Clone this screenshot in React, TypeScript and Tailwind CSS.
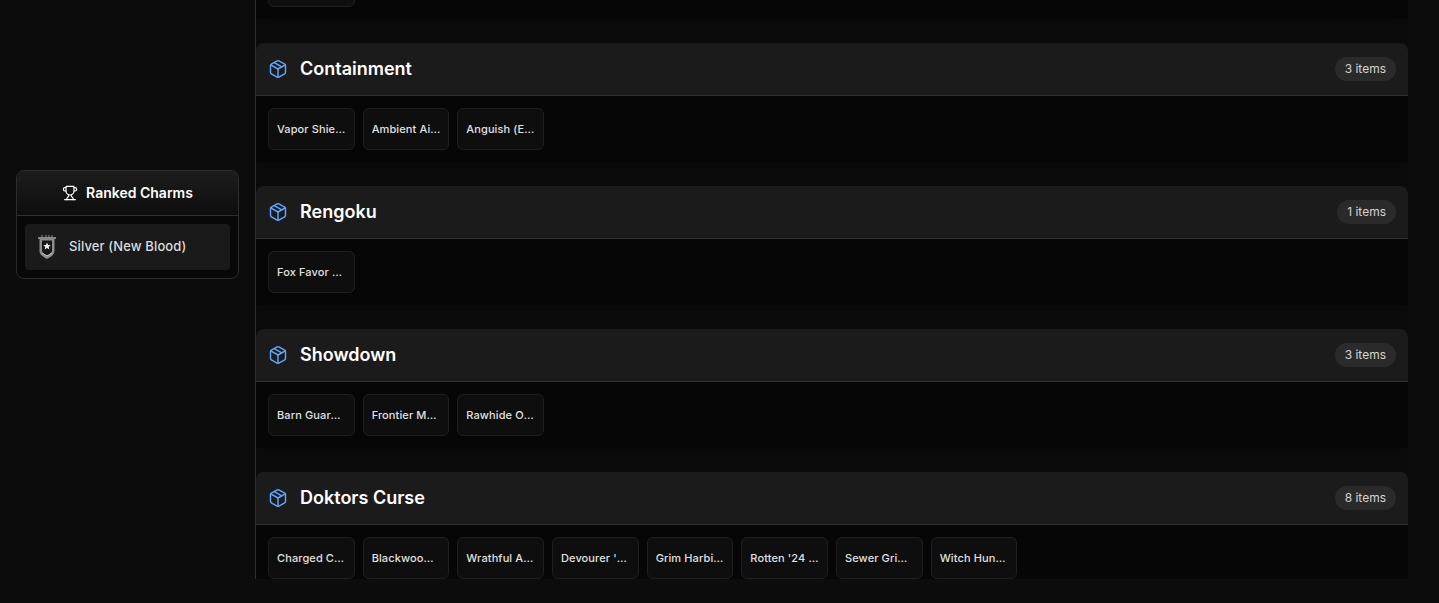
import { Package, Trophy } from "lucide-react";

const sections = [
  { name: "Containment", items: ["Vapor Shield (Epic)", "Ambient Air (Rare)", "Anguish (Epic)"] },
  { name: "Rengoku", items: ["Fox Favor (Rare)"] },
  { name: "Showdown", items: ["Barn Guardian (Rare)", "Frontier Medal (Epic)", "Rawhide Oath (Rare)"] },
  {
    name: "Doktors Curse",
    items: [
      "Charged Coil (Rare)",
      "Blackwood Totem (Rare)",
      "Wrathful Altar (Epic)",
      "Devourer '24 (Epic)",
      "Grim Harbinger (Rare)",
      "Rotten '24 Skull (Epic)",
      "Sewer Grime (Rare)",
      "Witch Hunter (Epic)",
    ],
  },
];

function Chip({ label }: { label: string }) {
  return (
    <div className="h-[42px] min-w-0 rounded-md border border-[#1f1f1f] bg-[#0e0e0e] px-2 flex items-center">
      <span className="truncate text-[11px] font-medium text-[#e0e0e0] tracking-[0.01em]">{label}</span>
    </div>
  );
}

function Badge() {
  return (
    <svg width="20" height="26" viewBox="0 0 20 26" fill="none">
      <path d="M5 1v3M9 1v3M12 1v3M15 1v3" stroke="#8a8a8a" strokeWidth="1" />
      <path d="M1 4h18" stroke="#a8a8a8" strokeWidth="1.4" />
      <path d="M2.5 5h15v12c0 4-4 6-7.500 8C6.500 23 2.500 21 2.500 17z" fill="#8c8c8c" />
      <path d="M5 6.500h10v10c0 2.500-2.500 4-5 5-2.500-1-5-2.500-5-5z" fill="#161616" />
      <path d="M10 8.500l1.100 2.500 2.700.2-2.100 1.700.7 2.600-2.400-1.400-2.400 1.400.7-2.600-2.100-1.700 2.700-.2z" fill="#f0f0f0" />
      <path d="M5 19l5 3 5-3" stroke="#c4c4c4" strokeWidth="1" />
    </svg>
  );
}

export default function App() {
  return (
    <div className="h-[603px] overflow-hidden bg-[#0c0c0d] flex font-['Inter',sans-serif] text-white">
      <aside className="w-[255px] shrink-0 px-4 pt-[170px]">
        <div className="rounded-lg border border-[#2c2c2c] bg-[#080808] overflow-hidden">
          <div className="h-[45px] border-b border-[#303030] bg-gradient-to-b from-[#1d1d1d] to-[#0d0d0d] flex items-center justify-center gap-2">
            <Trophy size={16} strokeWidth={1.75} color="#ffffff" />
            <span className="text-sm font-semibold text-white">Ranked Charms</span>
          </div>
          <div className="p-2">
            <div className="h-[46px] rounded bg-[#1a1a1a] flex items-center gap-3 px-3">
              <Badge />
              <span className="text-[13px] font-medium text-[#dcdcdc] tracking-[0.01em]">Silver (New Blood)</span>
            </div>
          </div>
        </div>
      </aside>
      <main className="h-[579px] overflow-hidden w-[1153px] shrink-0 border-l border-[#2e2e2e]">
        <div className="-mt-[47px] mb-6 p-3 bg-[#060606] shadow-[0_6px_16px_rgba(0,0,0,0.35)]">
          <div className="grid grid-cols-12 gap-2">
            <Chip label="Deadlock" />
          </div>
        </div>
        {sections.map((s) => (
          <section key={s.name} className="mb-6 shadow-[0_6px_16px_rgba(0,0,0,0.35)]">
            <header className="h-[53px] rounded-t-lg bg-[#1b1b1c] border-b border-[#313131] flex items-center justify-between pl-3 pr-3">
              <div className="flex items-center gap-3">
                <Package size={20} strokeWidth={1.75} color="#60a5fa" />
                <h2 className="text-lg font-semibold text-white">{s.name}</h2>
              </div>
              <span className="h-6 rounded-full bg-[#2a2a2b] px-2.5 flex items-center text-xs text-[#d4d4d4]">
                {s.items.length} items
              </span>
            </header>
            <div className="p-3 bg-[#060606]">
              <div className="grid grid-cols-12 gap-2">
                {s.items.map((i) => (
                  <Chip key={i} label={i} />
                ))}
              </div>
            </div>
          </section>
        ))}
      </main>
    </div>
  );
}
